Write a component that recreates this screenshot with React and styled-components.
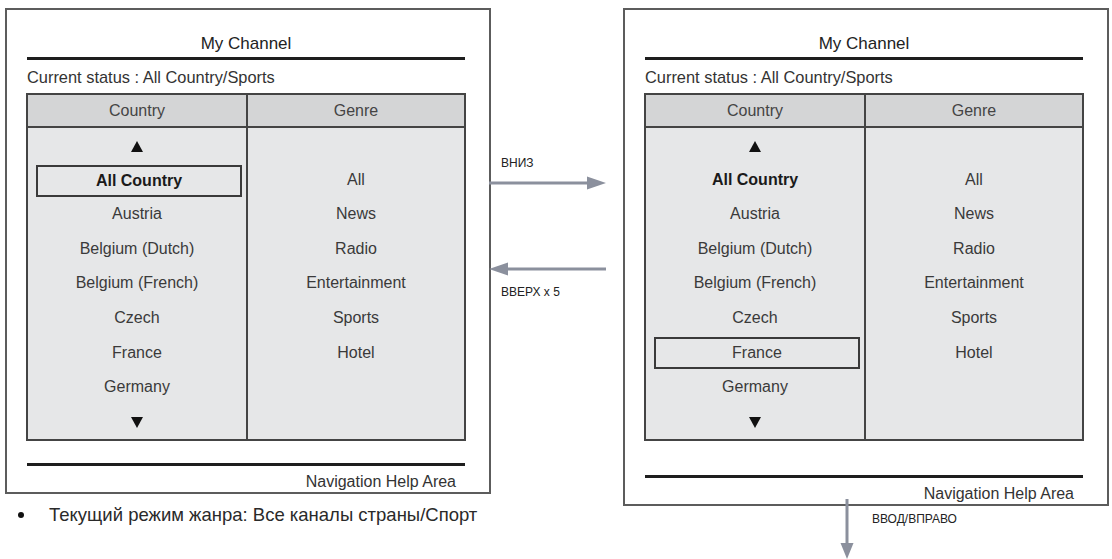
import React from "react";
import styled, { createGlobalStyle } from "styled-components";

const Global = createGlobalStyle`
  html, body { margin: 0; padding: 0; background: #fff; }
  body { font-family: "Liberation Sans", Arial, sans-serif; color: #333; }
  * { box-sizing: border-box; }
`;

const Page = styled.div`
  display: flex;
  align-items: flex-start;
  padding: 8px 0 0 5px;
  width: 1112px;
  height: 559px;
  overflow: hidden;
`;

const Column = styled.div`
  display: flex;
  flex-direction: column;
  width: 486px;
  flex: none;
`;

const Middle = styled.div`
  display: flex;
  flex-direction: column;
  width: 132px;
  flex: none;
  padding-top: 148px;
`;

const Panel = styled.div`
  width: 486px;
  border: 2px solid #5c5c5c;
  padding: 24px 0 0 19px;
  display: flex;
  flex-direction: column;
`;

const Title = styled.div`
  width: 440px;
  text-align: center;
  font-size: 17px;
  line-height: 20px;
  color: #222;
  margin-bottom: 3px;
`;

const Rule = styled.div`
  width: 438px;
  margin-left: 1px;
  height: 3px;
  background: #1e1e1e;
  margin-top: ${(p) => p.$top || 0}px;
`;

const Status = styled.div`
  margin-top: 7px;
  padding-left: 1px;
  font-size: 16.4px;
  line-height: 20px;
  color: #333;
`;

const Table = styled.div`
  margin-top: 6px;
  width: 440px;
  height: 348px;
  border: 2px solid #444;
  display: grid;
  grid-template-columns: 1fr 1fr;
  grid-template-rows: 33px 1fr;
`;

const Head = styled.div`
  background: #d4d5d6;
  border-bottom: 2px solid #444;
  border-left: ${(p) => (p.$divider ? "2px solid #444" : "none")};
  display: flex;
  align-items: center;
  justify-content: center;
  font-size: 16px;
  color: #444;
`;

const Body = styled.div`
  background: #e6e7e8;
  border-left: ${(p) => (p.$divider ? "2px solid #444" : "none")};
  display: grid;
  grid-template-rows: repeat(9, 1fr);
`;

const Row = styled.div`
  display: flex;
  align-items: center;
  justify-content: center;
  font-size: 16px;
  color: ${(p) => (p.$bold ? "#1a1a1a" : "#3a3a3a")};
  font-weight: ${(p) => (p.$bold ? 700 : 400)};
  ${(p) =>
    p.$selected &&
    `
    border: 2px solid #3a3a3a;
    height: 32px;
    margin: 2px 4px 0 8px;
  `}
`;

const Tri = styled.span`
  width: 0;
  height: 0;
  border-left: 6px solid transparent;
  border-right: 6px solid transparent;
  ${(p) =>
    p.$down
      ? "border-top: 11px solid #111; margin-top: 2px;"
      : "border-bottom: 11px solid #111; margin-top: 2px;"}
`;

const Nav = styled.div`
  margin-top: 6px;
  width: 440px;
  padding-right: 10px;
  text-align: right;
  font-size: 16px;
  line-height: 20px;
  color: #333;
`;

const Note = styled.div`
  margin-top: 11px;
  display: flex;
  align-items: center;
  padding-left: 13px;
  font-size: 18.5px;
  line-height: 20px;
  color: #2a2a2a;
  white-space: nowrap;
`;

const Dot = styled.span`
  width: 6px;
  height: 6px;
  border-radius: 50%;
  background: #111;
  margin-right: 25px;
  flex: none;
`;

const Label = styled.div`
  font-size: 12px;
  line-height: 14px;
  color: #222;
  padding-left: ${(p) => p.$left ?? 10}px;
  margin-top: ${(p) => p.$top || 0}px;
  white-space: nowrap;
`;

const HArrow = styled.svg`
  display: block;
  margin-left: -2px;
  margin-top: ${(p) => p.$top || 0}px;
`;

const DownRow = styled.div`
  display: flex;
  align-items: flex-start;
  margin-top: -7px;
  padding-left: 217px;
`;

const ARROW = "#8b909d";

function ArrowRight({ top }) {
  return (
    <HArrow $top={top} width="117" height="14" viewBox="0 0 117 14">
      <line x1="0" y1="7" x2="100" y2="7" stroke={ARROW} strokeWidth="3" />
      <polygon points="98,0.5 117,7 98,13.5" fill={ARROW} />
    </HArrow>
  );
}

function ArrowLeft({ top }) {
  return (
    <HArrow $top={top} width="117" height="14" viewBox="0 0 117 14">
      <line x1="17" y1="7" x2="117" y2="7" stroke={ARROW} strokeWidth="3" />
      <polygon points="19,0.5 0,7 19,13.5" fill={ARROW} />
    </HArrow>
  );
}

function ArrowDown() {
  return (
    <svg width="14" height="60" viewBox="0 0 14 60" style={{ display: "block", flex: "none" }}>
      <line x1="7" y1="0" x2="7" y2="46" stroke={ARROW} strokeWidth="3" />
      <polygon points="0.5,44 13.5,44 7,60" fill={ARROW} />
    </svg>
  );
}

const countries = [
  "All Country",
  "Austria",
  "Belgium (Dutch)",
  "Belgium (French)",
  "Czech",
  "France",
  "Germany",
];
const genres = ["All", "News", "Radio", "Entertainment", "Sports", "Hotel"];

function ChannelPanel({ selected, footerGap }) {
  return (
    <Panel>
      <Title>My Channel</Title>
      <Rule />
      <Status>Current status : All Country/Sports</Status>
      <Table>
        <Head>Country</Head>
        <Head $divider>Genre</Head>
        <Body>
          <Row>
            <Tri />
          </Row>
          {countries.map((c) => (
            <Row key={c} $bold={c === "All Country"} $selected={c === selected}>
              {c}
            </Row>
          ))}
          <Row>
            <Tri $down />
          </Row>
        </Body>
        <Body $divider>
          <Row />
          {genres.map((g) => (
            <Row key={g}>{g}</Row>
          ))}
        </Body>
      </Table>
      <Rule $top={footerGap} />
      <Nav>Navigation Help Area</Nav>
    </Panel>
  );
}

export default function App() {
  return (
    <>
      <Global />
      <Page>
        <Column>
          <ChannelPanel selected="All Country" footerGap={22} />
          <Note>
            <Dot />
            Текущий режим жанра: Все каналы страны/Спорт
          </Note>
        </Column>
        <Middle>
          <Label>ВНИЗ</Label>
          <ArrowRight top={6} />
          <ArrowLeft top={72} />
          <Label $top={9}>ВВЕРХ x 5</Label>
        </Middle>
        <Column>
          <ChannelPanel selected="France" footerGap={34} />
          <DownRow>
            <ArrowDown />
            <Label $left={18} $top={13}>ВВОД/ВПРАВО</Label>
          </DownRow>
        </Column>
      </Page>
    </>
  );
}
